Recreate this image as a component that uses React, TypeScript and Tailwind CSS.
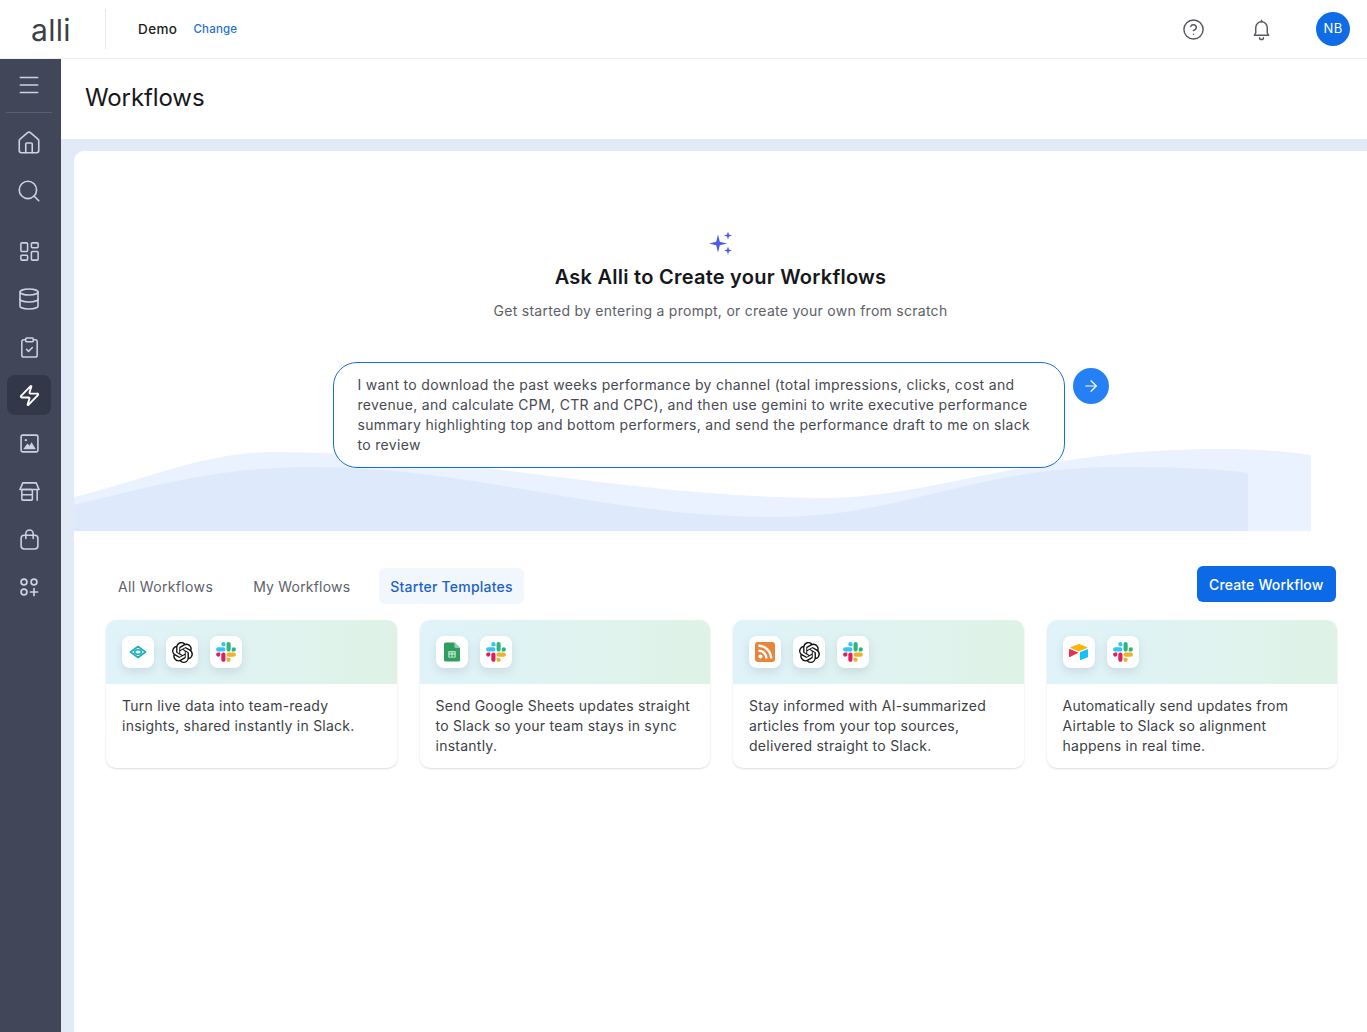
import { ArrowRight, CircleHelp, ClipboardCheck, Database, House, LayoutDashboard, Menu, Search, Zap } from "lucide-react"
import { SiOpenai } from "react-icons/si"

function Slack() {
  return (
    <svg viewBox="0 0 127 127" className="w-5 h-5">
      <path d="M27.2 80c0 7.3-5.9 13.2-13.2 13.2C6.7 93.2.8 87.3.8 80c0-7.3 5.9-13.2 13.2-13.2h13.2V80zm6.6 0c0-7.3 5.9-13.2 13.2-13.2 7.3 0 13.2 5.9 13.2 13.2v33c0 7.3-5.9 13.2-13.2 13.2-7.3 0-13.2-5.9-13.2-13.2V80z" fill="#E01E5A" />
      <path d="M47 27c-7.3 0-13.2-5.9-13.2-13.2C33.8 6.5 39.7.6 47 .6c7.3 0 13.2 5.9 13.2 13.2V27H47zm0 6.7c7.3 0 13.2 5.9 13.2 13.2 0 7.3-5.9 13.2-13.2 13.2H13.9C6.6 60.1.7 54.2.7 46.9c0-7.3 5.9-13.2 13.2-13.2H47z" fill="#36C5F0" />
      <path d="M99.9 46.9c0-7.3 5.9-13.2 13.2-13.2 7.3 0 13.2 5.9 13.2 13.2 0 7.3-5.9 13.2-13.2 13.2H99.9V46.9zm-6.6 0c0 7.3-5.9 13.2-13.2 13.2-7.3 0-13.2-5.9-13.2-13.2V13.8C66.9 6.5 72.8.6 80.1.6c7.3 0 13.2 5.9 13.2 13.2v33.1z" fill="#2EB67D" />
      <path d="M80.1 99.8c7.3 0 13.2 5.9 13.2 13.2 0 7.3-5.9 13.2-13.2 13.2-7.3 0-13.2-5.9-13.2-13.2V99.8h13.2zm0-6.6c-7.3 0-13.2-5.9-13.2-13.2 0-7.3 5.9-13.2 13.2-13.2h33.1c7.3 0 13.2 5.9 13.2 13.2 0 7.3-5.9 13.2-13.2 13.2H80.1z" fill="#ECB22E" />
    </svg>
  )
}

function AlliEye() {
  return (
    <svg viewBox="0 0 20 20" className="w-5 h-5" fill="none" stroke="#1fb0c4">
      <path d="M10 4.5 17.5 10 10 15.5 2.5 10z" strokeWidth="1.7" strokeLinejoin="round" />
      <ellipse cx="10" cy="10" rx="3.4" ry="2.3" strokeWidth="1.6" />
    </svg>
  )
}

function Sheets() {
  return (
    <svg viewBox="0 0 20 24" className="w-[16px] h-[20px]">
      <path d="M2 0h11l7 7v15a2 2 0 0 1-2 2H2a2 2 0 0 1-2-2V2a2 2 0 0 1 2-2z" fill="#2f9e5f" />
      <path d="M13 0l7 7h-5a2 2 0 0 1-2-2z" fill="#8fd0a8" />
      <path d="M5.5 11h9v8h-9zM6.8 12.2v1.6h2.6v-1.6zm3.8 0v1.6h2.6v-1.6zM6.8 15v2.8h2.6V15zm3.8 0v2.8h2.6V15z" fill="#dff3e6" fillRule="evenodd" />
    </svg>
  )
}

function Rss() {
  return (
    <svg viewBox="0 0 20 20" className="w-5 h-5">
      <rect width="20" height="20" rx="3" fill="#e8853a" />
      <circle cx="5.4" cy="14.6" r="2" fill="#fff" />
      <path d="M3.4 8.6a8 8 0 0 1 8 8M3.4 3.8a12.8 12.8 0 0 1 12.8 12.8" fill="none" stroke="#fff" strokeWidth="2.4" />
    </svg>
  )
}

function Airtable() {
  return (
    <svg viewBox="0 0 20 20" className="w-5 h-5">
      <path d="M9 2.2 1.8 5.2c-.4.2-.4.7 0 .9l7.3 2.9c.6.2 1.2.2 1.8 0l7.3-2.9c.4-.2.4-.7 0-.9L10.9 2.2c-.6-.2-1.3-.2-1.9 0z" fill="#fcb400" />
      <path d="M11 10.4v7.2c0 .3.4.6.7.4l7-2.7c.2-.1.3-.3.3-.5V7.6c0-.3-.4-.6-.7-.4l-7 2.7c-.2.1-.3.3-.3.5z" fill="#18bfff" />
      <path d="M9.3 10.8 1 15c-.4.2-1-.1-1-.5V7.7c0-.2.1-.3.2-.4l.3-.2h.3l8.4 3.3c.3.1.4.3.1.4z" fill="#e8304f" />
    </svg>
  )
}

function PictureIcon() {
  return (
    <svg viewBox="0 0 20 20" className="w-[21px] h-[21px]" fill="none" stroke="currentColor" strokeWidth="1.5">
      <rect x="2" y="2" width="16" height="16" rx="1.5" />
      <circle cx="6.5" cy="6.8" r="1.1" fill="currentColor" stroke="none" />
      <path d="M4 15.5 8 10l2 2.2 2-3.4 4 6.7z" fill="currentColor" stroke="none" />
    </svg>
  )
}

function StoreIcon() {
  return (
    <svg viewBox="0 0 24 24" className="w-[23px] h-[23px]" fill="none" stroke="currentColor" strokeWidth="1.6" strokeLinecap="round" strokeLinejoin="round">
      <path d="M5 3h14l3 7H2z" />
      <rect x="4" y="10" width="11" height="11" rx="1" />
      <path d="M4 15.5h11M20 10v11" />
    </svg>
  )
}

function BagIcon() {
  return (
    <svg viewBox="0 0 20 20" className="w-[21px] h-[21px]" fill="none" stroke="currentColor" strokeWidth="1.5" strokeLinecap="round">
      <rect x="2" y="6" width="16" height="13" rx="3" />
      <path d="M6.5 9V4.5a3.5 3.5 0 0 1 7 0V9" />
    </svg>
  )
}

function AppsIcon() {
  return (
    <svg viewBox="0 0 20 20" className="w-5 h-5" fill="none" stroke="currentColor" strokeWidth="1.7" strokeLinecap="round">
      <circle cx="5" cy="5" r="2.9" />
      <circle cx="15" cy="5" r="2.9" />
      <circle cx="5" cy="15" r="2.9" />
      <path d="M15 11.5v7M11.5 15h7" />
    </svg>
  )
}

function BellIcon() {
  return (
    <svg viewBox="0 0 24 24" className="w-[23px] h-[23px] text-[#55585f]" fill="none" stroke="currentColor" strokeWidth="1.5" strokeLinecap="round" strokeLinejoin="round">
      <path d="M12 4a6 6 0 0 0-6 6v5.5L4.5 18h15L18 15.5V10a6 6 0 0 0-6-6z" />
      <path d="M12 2.2V4M10 20.5a2 2 0 0 0 4 0" />
    </svg>
  )
}

const navTop = [
  { key: "home", icon: <House className="w-[26px] h-[26px]" strokeWidth={1.5} /> },
  { key: "search", icon: <Search className="w-[26px] h-[26px]" strokeWidth={1.5} /> },
]

const navRest = [
  { key: "grid", icon: <LayoutDashboard className="w-[23px] h-[23px]" strokeWidth={1.6} /> },
  { key: "db", icon: <Database className="w-[24px] h-[24px]" strokeWidth={1.6} /> },
  { key: "tasks", icon: <ClipboardCheck className="w-[23px] h-[23px]" strokeWidth={1.6} /> },
  { key: "workflows", active: true, icon: <Zap className="w-[23px] h-[23px]" strokeWidth={2} /> },
  { key: "images", icon: <PictureIcon /> },
  { key: "store", icon: <StoreIcon /> },
  { key: "bag", icon: <BagIcon /> },
  { key: "apps", icon: <AppsIcon /> },
]

const templates = [
  {
    icons: [<AlliEye key="a" />, <SiOpenai key="b" className="w-[21px] h-[21px] text-[#111]" />, <Slack key="c" />],
    text: "Turn live data into team-ready insights, shared instantly in Slack.",
  },
  {
    icons: [<Sheets key="a" />, <Slack key="b" />],
    text: "Send Google Sheets updates straight to Slack so your team stays in sync instantly.",
  },
  {
    icons: [<Rss key="a" />, <SiOpenai key="b" className="w-[21px] h-[21px] text-[#111]" />, <Slack key="c" />],
    text: "Stay informed with AI-summarized articles from your top sources, delivered straight to Slack.",
  },
  {
    icons: [<Airtable key="a" />, <Slack key="b" />],
    text: "Automatically send updates from Airtable to Slack so alignment happens in real time.",
  },
]

export default function App() {
  return (
    <div className="h-[1032px] w-[1367px] overflow-hidden bg-white flex flex-col font-['Inter',sans-serif] text-[#1a1c20]">
      <header className="h-[59px] shrink-0 border-b border-[#eceef1] flex items-center pr-[17px]">
        <div className="w-[106px] h-10 border-r border-[#e6e8eb] flex items-center justify-center">
          <span className="text-[30px] font-normal tracking-[0.3px] text-[#3c4048] leading-none pr-[3px] pt-[1px]">alli</span>
        </div>
        <span className="ml-[32px] text-[13.5px] font-medium tracking-[0.4px]">Demo</span>
        <span className="ml-[16px] mt-[1px] text-[11.5px] font-medium tracking-[0.2px] text-[#1f6fd6]">Change</span>
        <CircleHelp className="ml-auto w-[23px] h-[23px] text-[#55585f]" strokeWidth={1.5} />
        <div className="ml-[45px]"><BellIcon /></div>
        <div className="ml-[43px] w-[34px] h-[34px] rounded-full bg-[#0f6be6] text-white text-[13px] font-normal tracking-[0.3px] flex items-center justify-center">NB</div>
      </header>

      <div className="flex flex-1 min-h-0">
        <aside className="w-[61px] shrink-0 bg-[#414759] text-[#ccd2e2] flex flex-col items-center pr-[3px]">
          <div className="h-[54px] w-full flex items-center justify-center border-b border-[#5a6072] mx-auto max-w-[46px] pb-[2px]">
            <Menu className="w-[26px] h-[26px]" strokeWidth={1.4} />
          </div>
          <div className="h-[6px]" />
          {navTop.map((item) => (
            <div key={item.key} className="h-12 flex items-center justify-center">{item.icon}</div>
          ))}
          <div className="h-3" />
          {navRest.map((item) => (
            <div key={item.key} className="h-12 w-full flex items-center justify-center">
              {item.active ? (
                <div className="w-11 h-10 rounded-lg bg-[#333848] text-white flex items-center justify-center">{item.icon}</div>
              ) : (
                item.icon
              )}
            </div>
          ))}
        </aside>

        <div className="flex-1 min-w-0 flex flex-col">
          <div className="h-[80px] shrink-0 pl-[24px] flex items-center">
            <h1 className="text-[24px] font-normal tracking-[-0.1px] text-[#15171c] pb-[2px]">Workflows</h1>
          </div>

          <div className="flex-1 min-h-0 bg-[#e2eaf8] pt-[12px]">
            <div className="h-full ml-[13px] bg-white rounded-tl-[10px] relative">
              <svg className="absolute left-0 top-[296px]" width="1237" height="84" viewBox="0 0 1237 84">
                <path d="M0 50C80 30 130 5 203 5 C370 5 560 51 750 51 C860 51 960 2 1146 2 C1180 2 1210 4 1237 8V84H0z" fill="#e9f2fe" />
                <path d="M0 58C90 36 150 20 238 20 C400 20 530 70 700 70 C830 70 900 20 1042 20 C1090 20 1140 21 1174 26V84H0z" fill="#deeafc" />
              </svg>

              <div className="relative flex flex-col items-center pt-[80px]">
                <svg viewBox="0 0 26 26" className="w-[26px] h-[26px] shrink-0" fill="#4a5ce8">
                  <path d="M10 3.5 L11.8 10.7 L19 12.5 L11.8 14.3 L10 21.5 L8.2 14.3 L1 12.5 L8.2 10.7z" />
                  <path d="M20 .5l1 3 3 1-3 1-1 3-1-3-3-1 3-1zM20 15.5l1 3 3 1-3 1-1 3-1-3-3-1 3-1z" />
                </svg>
                <h2 className="mt-[6px] text-[20px] leading-7 font-semibold tracking-[0.25px] text-[#15171c]">Ask Alli to Create your Workflows</h2>
                <p className="mt-[10px] text-[14px] leading-5 tracking-[0.27px] text-[#5d6068]">Get started by entering a prompt, or create your own from scratch</p>
                <div className="mt-[41px] flex items-start gap-2">
                  <div className="w-[732px] h-[106px] rounded-[24px] border border-[#1a6ed8] bg-white pl-[24px] pr-4 pt-[12px] text-[14px] leading-5 tracking-[0.32px] text-[#474a52]">
                    I want to download the past weeks performance by channel (total impressions, clicks, cost and<br />
                    revenue, and calculate CPM, CTR and CPC), and then use gemini to write executive performance<br />
                    summary highlighting top and bottom performers, and send the performance draft to me on slack<br />
                    to review
                  </div>
                  <button className="mt-[6px] w-9 h-9 rounded-full bg-[#2680f5] text-white flex items-center justify-center">
                    <ArrowRight className="w-[18px] h-[18px]" strokeWidth={1.6} />
                  </button>
                </div>
              </div>

              <div className="relative mt-[98px] pl-[32px] pr-[30px]">
                <div className="flex items-center h-9">
                  <span className="ml-[12px] mt-[4px] text-[14px] tracking-[0.35px] text-[#5e6168]">All Workflows</span>
                  <span className="ml-[40px] mt-[4px] text-[14px] tracking-[0.2px] text-[#5e6168]">My Workflows</span>
                  <span className="ml-[29px] h-9 mt-[4px] px-[11px] rounded-md bg-[#f2f6fd] text-[14px] tracking-[0.22px] font-medium text-[#1a62c8] flex items-center">Starter Templates</span>
                  <button className="ml-auto mr-[1px] h-9 px-[12.5px] rounded-md bg-[#0c6ae6] text-white text-[14px] tracking-[0.15px] font-medium">Create Workflow</button>
                </div>
                <div className="mt-[18px] grid grid-cols-4 gap-[23px]">
                  {templates.map((t) => (
                    <div key={t.text} className="h-[148px] rounded-[10px] bg-white shadow-[0_1px_2px_rgba(30,40,60,0.16)] overflow-hidden">
                      <div className="h-16 bg-gradient-to-r from-[#e0f3fa] to-[#dff2e6] pl-4 flex items-start pt-4 gap-3">
                        {t.icons.map((icon, i) => (
                          <div key={i} className="w-8 h-8 rounded-lg bg-white shadow-[0_4px_10px_rgba(40,60,90,0.12)] flex items-center justify-center">{icon}</div>
                        ))}
                      </div>
                      <p className="px-4 pt-[12px] text-[14px] leading-5 tracking-[0.25px] text-[#3c3f46]">{t.text}</p>
                    </div>
                  ))}
                </div>
              </div>
            </div>
          </div>
        </div>
      </div>
    </div>
  )
}
